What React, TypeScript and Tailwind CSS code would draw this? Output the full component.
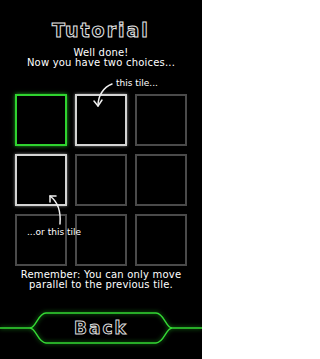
import React from 'react'

const tiles = [
  'green', 'white', 'dim',
  'white', 'dim', 'dim',
  'dim', 'dim', 'dim',
]

function Tile({ kind }: { kind: string }) {
  if (kind === 'green') {
    return <div className="h-[52px] w-[52px] border-2 border-[#2fd32f] shadow-[0_0_4px_#1fa31f]" />
  }
  if (kind === 'white') {
    return <div className="h-[52px] w-[52px] border-2 border-[#d4d4d4] shadow-[0_0_3px_#888]" />
  }
  return <div className="h-[52px] w-[52px] border-2 border-[#4a4a4a]" />
}

export default function App() {
  return (
    <div
      className="relative flex h-[359px] w-[202px] flex-col items-center overflow-hidden bg-black text-white"
      style={{ fontFamily: '"DejaVu Sans", sans-serif' }}
    >
      <h1
        className="mt-[20px] h-[20px] text-[19px] font-bold leading-[20px] tracking-[2px] text-transparent [-webkit-text-stroke:1px_#e5e5e5]"
      >
        Tutorial
      </h1>

      <div className="mt-[8px] h-[20px] whitespace-nowrap text-center text-[10px] leading-[10px] tracking-[0.2px] text-white">
        <p>Well done!</p>
        <p>Now you have two choices...</p>
      </div>

      <div className="relative mt-[26px] w-full">
        <div className="mx-auto grid w-[172px] grid-cols-3 gap-2">
          {tiles.map((t, i) => (
            <Tile key={i} kind={t} />
          ))}
        </div>

        {/* annotations */}
        <span className="absolute left-[116px] top-[-16px] whitespace-nowrap text-[9px] leading-[10px] text-white">
          this tile...
        </span>
        <span className="absolute left-[27px] top-[133px] whitespace-nowrap text-[9px] leading-[10px] text-white">
          ...or this tile
        </span>
        <svg
          className="pointer-events-none absolute left-0 top-[-94px]"
          width="202"
          height="359"
          viewBox="0 0 202 359"
          fill="none"
          stroke="#f0f0f0"
          strokeWidth="1.5"
          strokeLinecap="round"
          strokeLinejoin="round"
        >
          <path d="M112 84 C104 87, 98 95, 98 106" />
          <path d="M94 101 L98 106 L102 100" />
          <path d="M60 224 C61 212, 58 202, 50 196" />
          <path d="M50 202 L50 196 L56 196" />
        </svg>
      </div>

      <div className="mt-[4px] h-[20px] whitespace-nowrap text-center text-[10px] leading-[10px] tracking-[0.2px] text-white">
        <p>Remember: You can only move</p>
        <p>parallel to the previous tile.</p>
      </div>

      <button className="relative mt-[20px] flex h-[36px] w-full items-center justify-center">
        <svg
          className="absolute inset-0"
          width="202"
          height="36"
          viewBox="0 0 202 36"
          fill="none"
          stroke="#35d935"
          strokeWidth="1.4"
          style={{ filter: 'drop-shadow(0 0 2px #1a9a1a)' }}
        >
          <path d="M0 18 H30 C36 18, 38 3, 46 3 H156 C164 3, 166 18, 172 18 H202" />
          <path d="M30 18 C36 18, 38 33, 46 33 H156 C164 33, 166 18, 172 18" />
        </svg>
        <span className="relative text-[17px] font-bold leading-[18px] tracking-[2px] text-transparent [-webkit-text-stroke:1px_#d8d8d8]">
          Back
        </span>
      </button>
    </div>
  )
}
